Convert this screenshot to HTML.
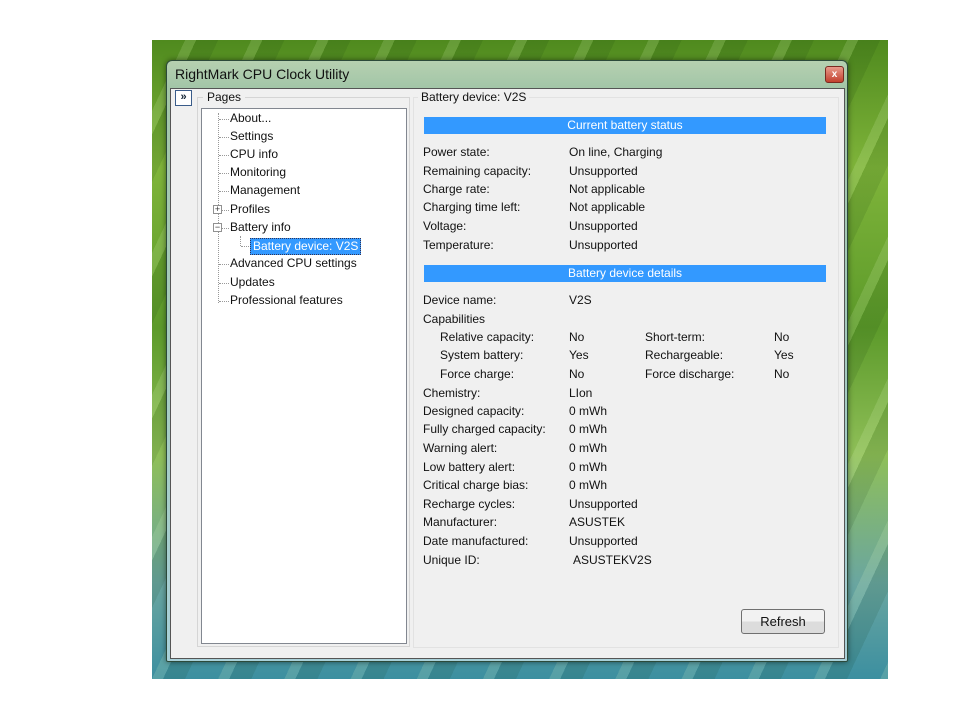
<!DOCTYPE html>
<html><head><style>
*{margin:0;padding:0;box-sizing:border-box}
body{width:960px;height:720px;background:#fff;position:relative;overflow:hidden;font-family:"Liberation Sans",Arial,sans-serif;font-size:12px;color:#111}
.bg{position:absolute;left:152px;top:40px;width:736px;height:639px;background:
linear-gradient(180deg,#4f8a1e 0%,#7fb43a 20%,#5c9a2a 45%,#8fbf58 65%,#6aa6a0 85%,#3c8fa0 100%);}
.bg2{position:absolute;left:152px;top:40px;width:736px;height:639px;background:repeating-linear-gradient(115deg,rgba(255,255,255,.0) 0 30px,rgba(230,255,200,.15) 30px 40px,rgba(0,40,0,.1) 40px 60px)}
.win{position:absolute;left:166px;top:60px;width:682px;height:602px;border:1px solid #2c4a3a;background:linear-gradient(180deg,#b6d0b0 0,#a3c6a8 26px,#a8d0d8 100%);border-radius:6px 6px 2px 2px;box-shadow:0 0 6px rgba(0,0,0,.5)}
.title{position:absolute;left:175px;top:66px;font-size:14px;color:#111}
.close{position:absolute;left:825px;top:66px;width:19px;height:17px;background:linear-gradient(#e89a8a,#c2402e);border:1px solid #7a2a20;border-radius:3px;color:#fff;font-size:10px;text-align:center;line-height:15px;font-weight:bold}
.client{position:absolute;left:170px;top:88px;width:675px;height:571px;background:#f0f0f0;border:1px solid #555}
.dbl{position:absolute;left:175px;top:90px;width:17px;height:16px;border:1px solid #3a5c8a;background:#fff;font-size:11px;font-weight:bold;line-height:13px;text-align:center;color:#123}
.grp{position:absolute;left:197px;top:97px;width:213px;height:550px;border:1px solid #d5d5d5}
.tree{position:absolute;left:201px;top:108px;width:206px;height:536px;background:#fff;border:1px solid #828790}
.t{position:absolute;white-space:nowrap;line-height:15px}
.rp{position:absolute;left:413px;top:97px;width:426px;height:551px;border:1px solid #e2e2e2;background:#f0f0f0}
.bar{position:absolute;left:424px;width:402px;height:17px;background:#3399ff;color:#fff;text-align:center;line-height:17px}
.btn{position:absolute;left:741px;top:609px;width:84px;height:25px;border:1px solid #707070;border-radius:3px;background:linear-gradient(#f2f2f2 50%,#dcdcdc 50%);text-align:center;line-height:23px;font-size:13px}
.dot{position:absolute;border-top:1px dotted #999}
.vdot{position:absolute;border-left:1px dotted #999}
.pm{position:absolute;width:9px;height:9px;border:1px solid #919191;background:#fff;font-size:9px;line-height:7px;text-align:center;color:#333}
</style></head><body>
<div class="bg"></div><div class="bg2"></div>
<div class="win"></div>
<div class="title">RightMark CPU Clock Utility</div>
<div class="close">x</div>
<div class="client"></div>
<div class="dbl">»</div>
<div class="grp"></div>
<div class="t" style="left:203px;top:90px;background:#f0f0f0;padding:0 4px">Pages</div>
<div class="tree"></div>
<div class="vdot" style="left:218px;top:113px;height:190px"></div>
<div class="vdot" style="left:240px;top:236px;height:10px"></div>
<div class="dot" style="left:219px;top:119px;width:10px"></div>
<div class="dot" style="left:219px;top:137px;width:10px"></div>
<div class="dot" style="left:219px;top:155px;width:10px"></div>
<div class="dot" style="left:219px;top:173px;width:10px"></div>
<div class="dot" style="left:219px;top:191px;width:10px"></div>
<div class="dot" style="left:219px;top:210px;width:10px"></div>
<div class="dot" style="left:219px;top:228px;width:10px"></div>
<div class="dot" style="left:241px;top:246px;width:10px"></div>
<div class="dot" style="left:219px;top:264px;width:10px"></div>
<div class="dot" style="left:219px;top:283px;width:10px"></div>
<div class="dot" style="left:219px;top:301px;width:10px"></div>
<div class="pm" style="left:213px;top:205px">+</div>
<div class="pm" style="left:213px;top:223px">−</div>
<div class="t" style="left:230px;top:111px">About...</div>
<div class="t" style="left:230px;top:129px">Settings</div>
<div class="t" style="left:230px;top:147px">CPU info</div>
<div class="t" style="left:230px;top:165px">Monitoring</div>
<div class="t" style="left:230px;top:183px">Management</div>
<div class="t" style="left:230px;top:202px">Profiles</div>
<div class="t" style="left:230px;top:220px">Battery info</div>
<div class="t" style="left:250px;top:238px;background:#3399ff;color:#fff;padding:0 2px;border:1px dotted #335">Battery device: V2S</div>
<div class="t" style="left:230px;top:256px">Advanced CPU settings</div>
<div class="t" style="left:230px;top:275px">Updates</div>
<div class="t" style="left:230px;top:293px">Professional features</div>

<div class="rp"></div>
<div class="t" style="left:418px;top:90px;background:#f0f0f0;padding:0 3px">Battery device: V2S</div>
<div class="bar" style="top:117px">Current battery status</div>
<div class="bar" style="top:265px">Battery device details</div>

<div class="t" style="left:423px;top:145px">Power state:</div><div class="t" style="left:569px;top:145px">On line, Charging</div>
<div class="t" style="left:423px;top:164px">Remaining capacity:</div><div class="t" style="left:569px;top:164px">Unsupported</div>
<div class="t" style="left:423px;top:182px">Charge rate:</div><div class="t" style="left:569px;top:182px">Not applicable</div>
<div class="t" style="left:423px;top:200px">Charging time left:</div><div class="t" style="left:569px;top:200px">Not applicable</div>
<div class="t" style="left:423px;top:219px">Voltage:</div><div class="t" style="left:569px;top:219px">Unsupported</div>
<div class="t" style="left:423px;top:238px">Temperature:</div><div class="t" style="left:569px;top:238px">Unsupported</div>

<div class="t" style="left:423px;top:293px">Device name:</div><div class="t" style="left:569px;top:293px">V2S</div>
<div class="t" style="left:423px;top:312px">Capabilities</div>
<div class="t" style="left:440px;top:330px">Relative capacity:</div><div class="t" style="left:569px;top:330px">No</div>
<div class="t" style="left:645px;top:330px">Short-term:</div><div class="t" style="left:774px;top:330px">No</div>
<div class="t" style="left:440px;top:348px">System battery:</div><div class="t" style="left:569px;top:348px">Yes</div>
<div class="t" style="left:645px;top:348px">Rechargeable:</div><div class="t" style="left:774px;top:348px">Yes</div>
<div class="t" style="left:440px;top:367px">Force charge:</div><div class="t" style="left:569px;top:367px">No</div>
<div class="t" style="left:645px;top:367px">Force discharge:</div><div class="t" style="left:774px;top:367px">No</div>
<div class="t" style="left:423px;top:386px">Chemistry:</div><div class="t" style="left:569px;top:386px">LIon</div>
<div class="t" style="left:423px;top:404px">Designed capacity:</div><div class="t" style="left:569px;top:404px">0 mWh</div>
<div class="t" style="left:423px;top:422px">Fully charged capacity:</div><div class="t" style="left:569px;top:422px">0 mWh</div>
<div class="t" style="left:423px;top:441px">Warning alert:</div><div class="t" style="left:569px;top:441px">0 mWh</div>
<div class="t" style="left:423px;top:460px">Low battery alert:</div><div class="t" style="left:569px;top:460px">0 mWh</div>
<div class="t" style="left:423px;top:478px">Critical charge bias:</div><div class="t" style="left:569px;top:478px">0 mWh</div>
<div class="t" style="left:423px;top:497px">Recharge cycles:</div><div class="t" style="left:569px;top:497px">Unsupported</div>
<div class="t" style="left:423px;top:515px">Manufacturer:</div><div class="t" style="left:569px;top:515px">ASUSTEK</div>
<div class="t" style="left:423px;top:534px">Date manufactured:</div><div class="t" style="left:569px;top:534px">Unsupported</div>
<div class="t" style="left:423px;top:553px">Unique ID:</div><div class="t" style="left:573px;top:553px">ASUSTEKV2S</div>
<div class="btn">Refresh</div>
</body></html>
